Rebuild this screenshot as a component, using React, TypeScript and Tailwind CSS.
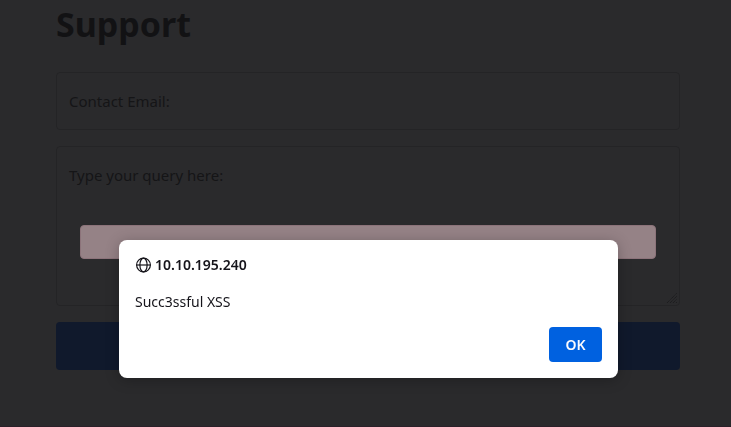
import React from "react";

function ResizeGrip() {
  return (
    <svg
      aria-hidden="true"
      viewBox="0 0 12 12"
      className="pointer-events-none col-start-1 row-start-1 mr-px mb-px size-3 self-end justify-self-end"
      fill="none"
      stroke="#19191b"
      strokeWidth="1"
      strokeDasharray="1 0.8"
    >
      <path d="M1 11 11 1M4 11l7-7M7 11l4-4M10 11l1-1" />
    </svg>
  );
}

function GlobeIcon() {
  return (
    <svg
      aria-hidden="true"
      viewBox="0 0 16 16"
      className="size-4 shrink-0"
      fill="none"
      stroke="#15141a"
      strokeWidth="1.2"
    >
      <circle cx="8.5" cy="8" r="6.9" />
      <ellipse cx="8.5" cy="8" rx="3.6" ry="6.9" />
      <path d="M1.6 8h13.8" />
    </svg>
  );
}

function SupportForm() {
  return (
    <form className="flex flex-col gap-4" onSubmit={(e) => e.preventDefault()}>
      <div className="grid rounded border border-[#242426]">
        <input
          id="email"
          type="email"
          className="col-start-1 row-start-1 h-14 w-full bg-transparent px-3 outline-none"
        />
        <label
          htmlFor="email"
          className="pointer-events-none col-start-1 row-start-1 self-center px-3 text-[15px] leading-6"
        >
          Contact Email:
        </label>
      </div>

      <div className="grid rounded border border-[#242426]">
        <textarea
          id="query"
          className="col-start-1 row-start-1 h-[158px] w-full resize-none bg-transparent px-3 py-4 outline-none"
        />
        <label
          htmlFor="query"
          className="pointer-events-none col-start-1 row-start-1 self-start px-3 py-4 text-[15px] leading-6"
        >
          Type your query here:
        </label>
        <div
          role="alert"
          className="col-start-1 row-start-1 mx-[23px] mt-[78px] h-[34px] self-start rounded-sm border border-[#8c737a] bg-[#958286]"
        />
        <ResizeGrip />
      </div>

      <button type="submit" aria-label="Submit" className="h-12 w-full rounded bg-[#10192c]" />
    </form>
  );
}

function AlertDialog() {
  return (
    <div className="fixed inset-0 flex items-end justify-center pb-[49px] pl-[6px]">
      <div
        role="alertdialog"
        aria-labelledby="origin"
        aria-describedby="message"
        className="w-[499px] rounded-lg bg-white p-4 pt-[13px] text-[#15141a] shadow-[0_2px_14px_rgba(0,0,0,0.25)]"
      >
        <div className="flex items-center gap-1">
          <GlobeIcon />
          <h2 id="origin" className="text-sm leading-6 font-semibold">
            10.10.195.240
          </h2>
        </div>
        <p id="message" className="mt-[13px] text-sm leading-6">
          Succ3ssful XSS
        </p>
        <div className="mt-[13px] flex justify-end">
          <button
            type="button"
            className="h-[35px] w-[53px] rounded bg-[#0061e0] text-sm font-semibold text-[#fbfbfe]"
          >
            OK
          </button>
        </div>
      </div>
    </div>
  );
}

export default function App() {
  return (
    <div className="min-h-screen border-b border-[#2b2029] bg-[#2a2a2c] pr-[51px] pl-14 font-['Noto_Sans',sans-serif] text-[#151517]">
      <h1 className="mb-6 text-[34px] leading-[48px] font-bold text-[#121214]">Support</h1>
      <SupportForm />
      <AlertDialog />
    </div>
  );
}
